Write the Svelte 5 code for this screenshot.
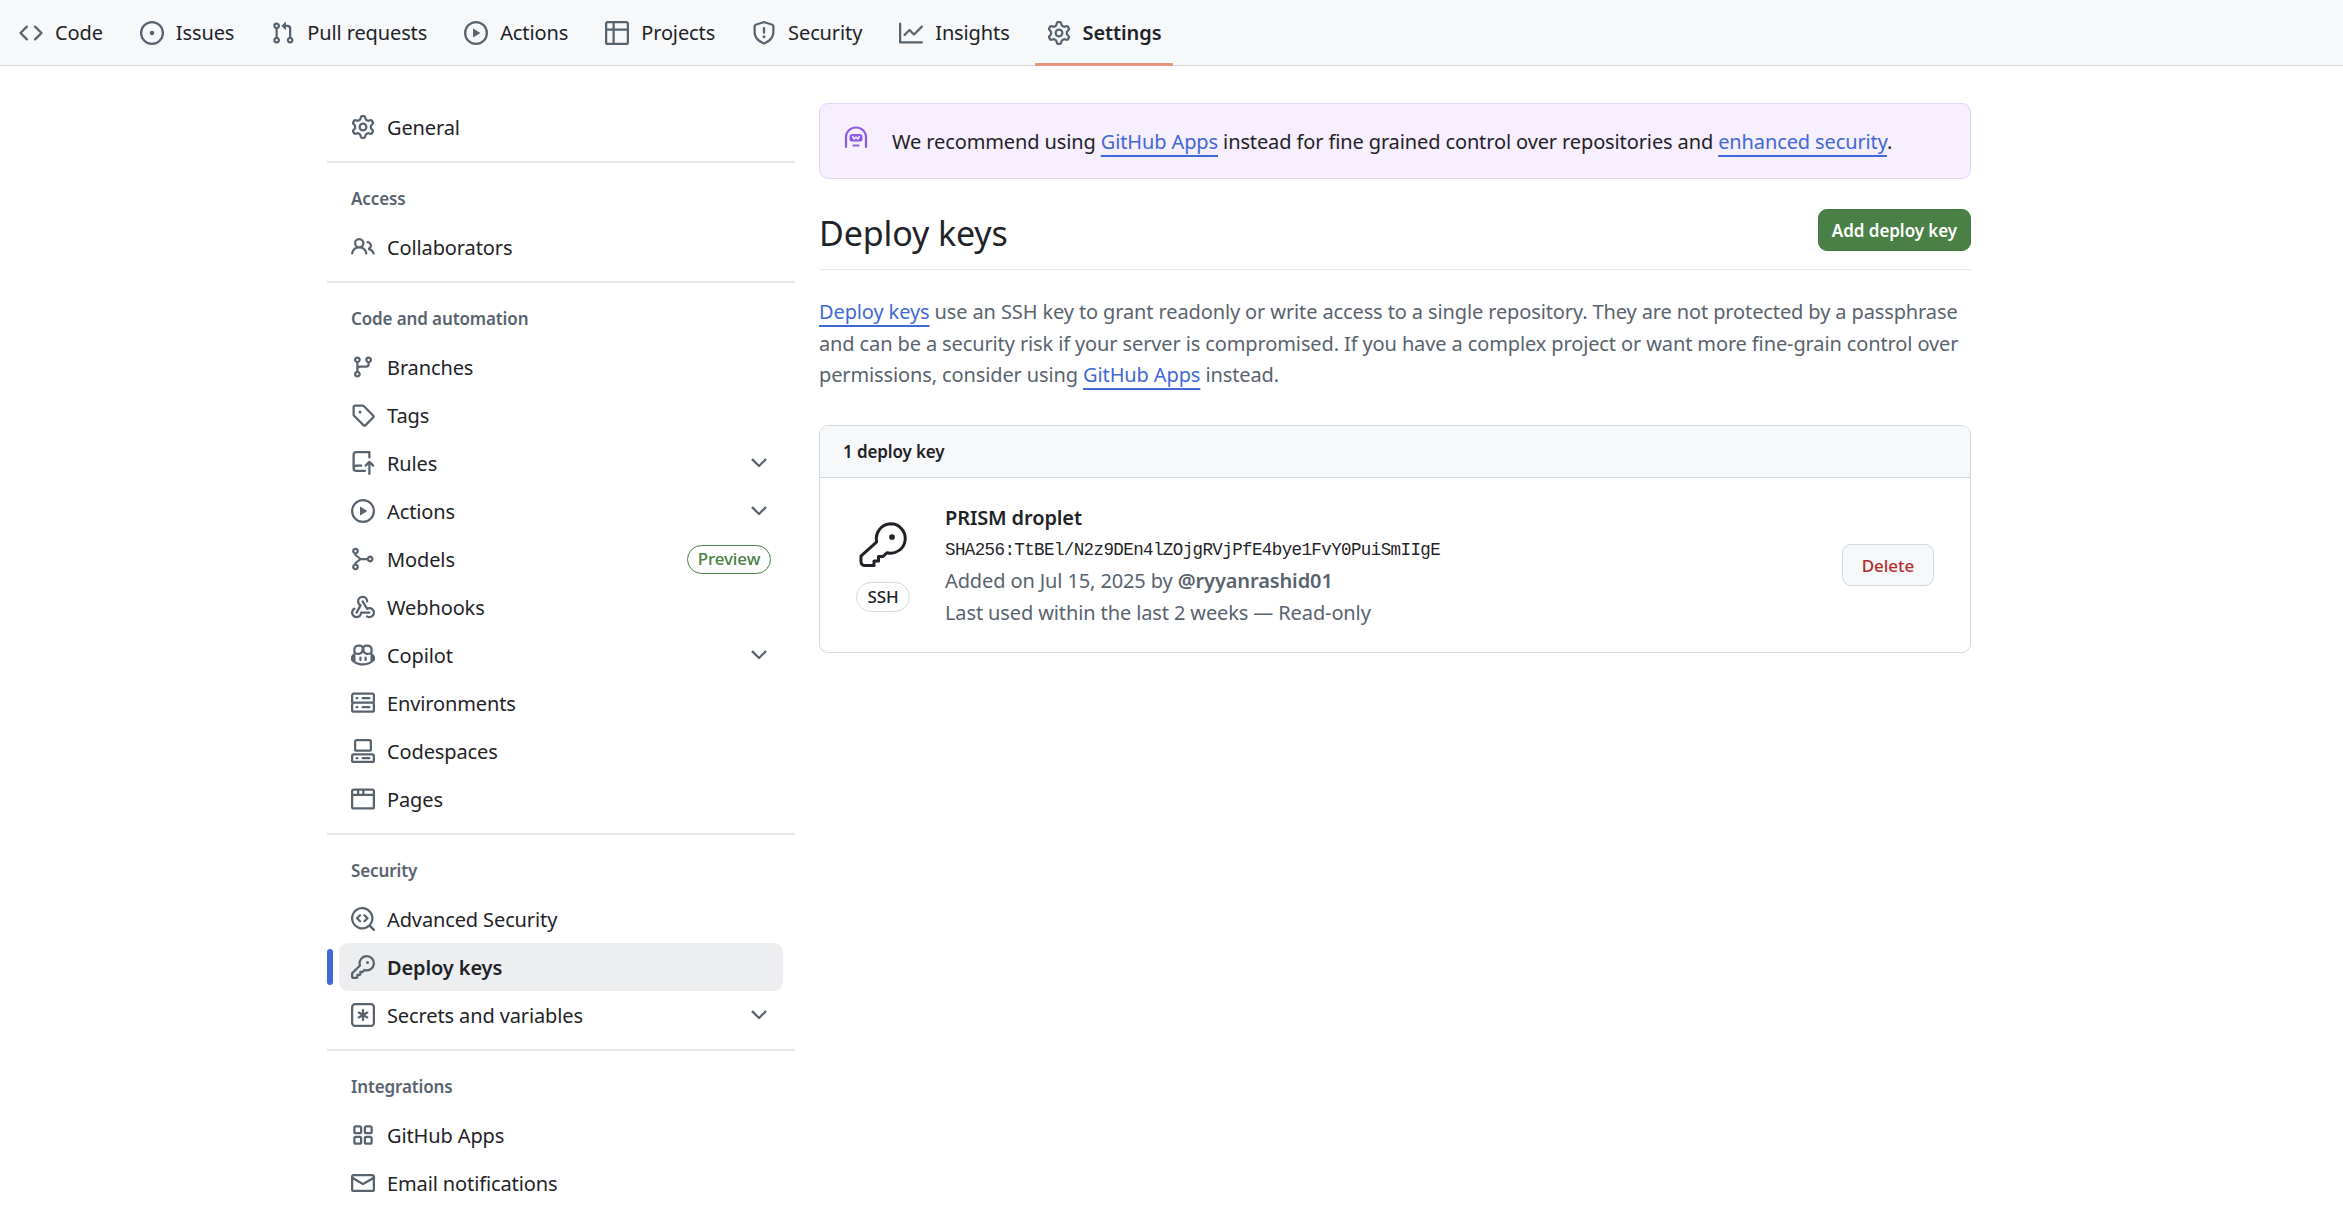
<script>
  const icons = {
    code: "m11.28 3.22 4.25 4.25a.75.75 0 0 1 0 1.06l-4.25 4.25a.749.749 0 0 1-1.275-.326.749.749 0 0 1 .215-.734L13.94 8l-3.72-3.72a.749.749 0 0 1 .326-1.275.749.749 0 0 1 .734.215Zm-6.56 0a.751.751 0 0 1 1.042.018.751.751 0 0 1 .018 1.042L2.06 8l3.72 3.72a.749.749 0 0 1-.326 1.275.749.749 0 0 1-.734-.215L.47 8.53a.75.75 0 0 1 0-1.06Z",
    issue: "M8 9.5a1.5 1.5 0 1 0 0-3 1.5 1.5 0 0 0 0 3Z M8 0a8 8 0 1 1 0 16A8 8 0 0 1 8 0ZM1.5 8a6.5 6.5 0 1 0 13 0 6.5 6.5 0 0 0-13 0Z",
    pull: "M1.5 3.25a2.25 2.25 0 1 1 3 2.122v5.256a2.251 2.251 0 1 1-1.5 0V5.372A2.25 2.25 0 0 1 1.5 3.25Zm5.677-.177L9.573.677A.25.25 0 0 1 10 .854V2.5h1A2.5 2.5 0 0 1 13.5 5v5.628a2.251 2.251 0 1 1-1.5 0V5a1 1 0 0 0-1-1h-1v1.646a.25.25 0 0 1-.427.177L7.177 3.427a.25.25 0 0 1 0-.354ZM3.75 2.5a.75.75 0 1 0 0 1.5.75.75 0 0 0 0-1.5Zm0 9.5a.75.75 0 1 0 0 1.5.75.75 0 0 0 0-1.5Zm8.25.75a.75.75 0 1 0 1.5 0 .75.75 0 0 0-1.5 0Z",
    play: "M8 0a8 8 0 1 1 0 16A8 8 0 0 1 8 0ZM1.5 8a6.5 6.5 0 1 0 13 0 6.5 6.5 0 0 0-13 0Zm4.879-2.773 4.264 2.559a.25.25 0 0 1 0 .428l-4.264 2.559A.25.25 0 0 1 6 10.559V5.442a.25.25 0 0 1 .379-.215Z",
    table: "M0 1.75C0 .784.784 0 1.75 0h12.5C15.216 0 16 .784 16 1.75v12.5A1.75 1.75 0 0 1 14.25 16H1.75A1.75 1.75 0 0 1 0 14.25ZM6.5 6.5v8h7.75a.25.25 0 0 0 .25-.25V6.5Zm8-1.5V1.75a.25.25 0 0 0-.25-.25H6.5V5Zm-13 1.5v7.75c0 .138.112.25.25.25H5v-8ZM5 5V1.5H1.75a.25.25 0 0 0-.25.25V5Z",
    shield: "M7.467.133a1.748 1.748 0 0 1 1.066 0l5.25 1.68A1.75 1.75 0 0 1 15 3.48V7c0 1.566-.32 3.182-1.303 4.682-.983 1.498-2.585 2.813-5.032 3.855a1.697 1.697 0 0 1-1.33 0c-2.447-1.042-4.049-2.357-5.032-3.855C1.32 10.182 1 8.566 1 7V3.48a1.75 1.75 0 0 1 1.217-1.667Zm.61 1.429a.25.25 0 0 0-.153 0l-5.25 1.68a.25.25 0 0 0-.174.238V7c0 1.358.275 2.666 1.057 3.86.784 1.194 2.121 2.34 4.366 3.297a.196.196 0 0 0 .154 0c2.245-.956 3.582-2.104 4.366-3.298C13.225 9.666 13.5 8.36 13.5 7V3.48a.251.251 0 0 0-.174-.237l-5.25-1.68ZM8.75 4.75v3a.75.75 0 0 1-1.5 0v-3a.75.75 0 0 1 1.5 0ZM9 10.5a1 1 0 1 1-2 0 1 1 0 0 1 2 0Z",
    graph: "M1.5 1.75V13.5h13.75a.75.75 0 0 1 0 1.5H.75a.75.75 0 0 1-.75-.75V1.75a.75.75 0 0 1 1.5 0Zm14.28 2.53-5.25 5.25a.75.75 0 0 1-1.06 0L7 7.06 4.28 9.78a.751.751 0 0 1-1.042-.018.751.751 0 0 1-.018-1.042l3.25-3.25a.75.75 0 0 1 1.06 0L10 7.94l4.72-4.72a.751.751 0 0 1 1.042.018.751.751 0 0 1 .018 1.042Z",
    gear: "M8 0a8.2 8.2 0 0 1 .701.031C9.444.095 9.99.645 10.16 1.29l.288 1.107c.018.066.079.158.212.224.231.114.454.243.668.386.123.082.233.09.299.071l1.103-.303c.644-.176 1.392.021 1.82.63.27.385.506.792.704 1.218.315.675.111 1.422-.364 1.891l-.814.806c-.049.048-.098.147-.088.294.016.257.016.515 0 .772-.01.147.038.246.088.294l.814.806c.475.469.679 1.216.364 1.891a7.977 7.977 0 0 1-.704 1.217c-.428.61-1.176.807-1.82.63l-1.102-.302c-.067-.019-.177-.011-.3.071a5.909 5.909 0 0 1-.668.386c-.133.066-.194.158-.211.224l-.29 1.106c-.168.646-.715 1.196-1.458 1.26a8.006 8.006 0 0 1-1.402 0c-.743-.064-1.289-.614-1.458-1.26l-.289-1.106c-.018-.066-.079-.158-.212-.224a5.738 5.738 0 0 1-.668-.386c-.123-.082-.233-.09-.299-.071l-1.103.303c-.644.176-1.392-.021-1.82-.63a8.12 8.12 0 0 1-.704-1.218c-.315-.675-.111-1.422.363-1.891l.815-.806c.05-.048.098-.147.088-.294a6.214 6.214 0 0 1 0-.772c.01-.147-.038-.246-.088-.294l-.815-.806C.635 6.045.431 5.298.746 4.623a7.92 7.92 0 0 1 .704-1.217c.428-.61 1.176-.807 1.82-.63l1.102.302c.067.019.177.011.3-.071.214-.143.437-.272.668-.386.133-.066.194-.158.211-.224l.29-1.106C6.009.645 6.556.095 7.299.03 7.53.01 7.764 0 8 0Zm-.571 1.525c-.036.003-.108.036-.137.146l-.289 1.105c-.147.561-.549.967-.998 1.189-.173.086-.34.183-.5.29-.417.278-.97.423-1.529.27l-1.103-.303c-.109-.03-.175.016-.195.045-.22.312-.412.644-.573.99-.014.031-.021.11.059.19l.815.806c.411.406.562.957.53 1.456a4.709 4.709 0 0 0 0 .582c.032.499-.119 1.05-.53 1.456l-.815.806c-.081.08-.073.159-.059.19.162.346.353.677.573.989.02.03.085.076.195.046l1.102-.303c.56-.153 1.113-.008 1.53.27.161.107.328.204.501.29.447.222.85.629.997 1.189l.289 1.105c.029.109.101.143.137.146a6.6 6.6 0 0 0 1.142 0c.036-.003.108-.036.137-.146l.289-1.105c.147-.561.549-.967.998-1.189.173-.086.34-.183.5-.29.417-.278.97-.423 1.529-.27l1.103.303c.109.029.175-.016.195-.045.22-.313.411-.644.573-.99.014-.031.021-.11-.059-.19l-.815-.806c-.411-.406-.562-.957-.53-1.456a4.709 4.709 0 0 0 0-.582c-.032-.499.119-1.05.53-1.456l.815-.806c.081-.08.073-.159.059-.19a6.464 6.464 0 0 0-.573-.989c-.02-.03-.085-.076-.195-.046l-1.102.303c-.56.153-1.113.008-1.53-.27a4.44 4.44 0 0 0-.501-.29c-.447-.222-.85-.629-.997-1.189l-.289-1.105c-.029-.11-.101-.143-.137-.146a6.6 6.6 0 0 0-1.142 0ZM11 8a3 3 0 1 1-6 0 3 3 0 0 1 6 0ZM9.5 8a1.5 1.5 0 1 0-3.001.001A1.5 1.5 0 0 0 9.5 8Z",
    people: "M2 5.5a3.5 3.5 0 1 1 5.898 2.549 5.508 5.508 0 0 1 3.034 4.084.75.75 0 1 1-1.482.235 4 4 0 0 0-7.9 0 .75.75 0 0 1-1.482-.236A5.507 5.507 0 0 1 3.102 8.05 3.493 3.493 0 0 1 2 5.5ZM11 4a3.001 3.001 0 0 1 2.22 5.018 5.01 5.01 0 0 1 2.56 3.012.749.749 0 0 1-.885.954.752.752 0 0 1-.549-.514 3.507 3.507 0 0 0-2.522-2.372.75.75 0 0 1-.574-.73v-.352a.75.75 0 0 1 .416-.672A1.5 1.5 0 0 0 11 5.5.75.75 0 0 1 11 4Zm-5.5-.5a2 2 0 1 0-.001 3.999A2 2 0 0 0 5.5 3.5Z",
    branch: "M9.5 3.25a2.25 2.25 0 1 1 3 2.122V6A2.5 2.5 0 0 1 10 8.5H6a1 1 0 0 0-1 1v1.128a2.251 2.251 0 1 1-1.5 0V5.372a2.25 2.25 0 1 1 1.5 0v1.836A2.493 2.493 0 0 1 6 7h4a1 1 0 0 0 1-1v-.628A2.25 2.25 0 0 1 9.5 3.25Zm-6 0a.75.75 0 1 0 1.5 0 .75.75 0 0 0-1.5 0Zm8.25-.75a.75.75 0 1 0 0 1.5.75.75 0 0 0 0-1.5ZM4.25 12a.75.75 0 1 0 0 1.5.75.75 0 0 0 0-1.5Z",
    tag: "M1 7.775V2.75C1 1.784 1.784 1 2.75 1h5.025c.464 0 .91.184 1.238.513l6.25 6.25a1.75 1.75 0 0 1 0 2.474l-5.026 5.026a1.75 1.75 0 0 1-2.474 0l-6.25-6.25A1.752 1.752 0 0 1 1 7.775Zm1.5 0c0 .066.026.13.073.177l6.25 6.25a.25.25 0 0 0 .354 0l5.025-5.025a.25.25 0 0 0 0-.354l-6.25-6.25a.25.25 0 0 0-.177-.073H2.75a.25.25 0 0 0-.25.25ZM6 5a1 1 0 1 1 0 2 1 1 0 0 1 0-2Z",
    rules: "M1 2.5A2.5 2.5 0 0 1 3.5 0h8.75a.75.75 0 0 1 .75.75v3.5a.75.75 0 0 1-1.5 0V1.5h-8a1 1 0 0 0-1 1v6.708A2.493 2.493 0 0 1 3.5 9h3.25a.75.75 0 0 1 0 1.5H3.5a1 1 0 0 0 0 2h5.75a.75.75 0 0 1 0 1.5H3.5A2.5 2.5 0 0 1 1 11.5Zm13.23 7.79h-.001l-1.224-1.224v6.184a.75.75 0 0 1-1.5 0V9.066L10.28 10.29a.75.75 0 0 1-1.06-1.061l2.505-2.504a.75.75 0 0 1 1.06 0L15.29 9.23a.751.751 0 0 1-.018 1.042.751.751 0 0 1-1.042.018Z",
    webhook: "M5.5 4.25a2.25 2.25 0 0 1 4.5 0 .75.75 0 0 0 1.5 0 3.75 3.75 0 1 0-6.14 2.889l-2.272 4.258a.75.75 0 0 0 1.324.706L7 7.25a.75.75 0 0 0-.309-1.015A2.25 2.25 0 0 1 5.5 4.25Z M7.364 3.607a.75.75 0 0 1 1.03.257l2.608 4.349a3.75 3.75 0 1 1-.628 6.785.75.75 0 0 1 .752-1.299 2.25 2.25 0 1 0-.033-3.88.75.75 0 0 1-1.03-.256L7.107 4.636a.75.75 0 0 1 .257-1.03Z M2.9 8.776A.75.75 0 0 1 2.625 9.8 2.25 2.25 0 1 0 6 11.75a.75.75 0 0 1 .75-.751h5.5a.75.75 0 0 1 0 1.5H7.425a3.751 3.751 0 1 1-5.55-3.998.75.75 0 0 1 1.024.274Z",
    copilot: "M7.998 15.035c-4.562 0-7.873-2.914-7.998-3.749V9.338c.085-.628.677-1.686 1.588-2.065.013-.07.024-.143.036-.218.029-.183.06-.384.126-.612-.201-.508-.254-1.084-.254-1.656 0-.87.128-1.769.693-2.484.579-.733 1.494-1.124 2.724-1.261 1.206-.134 2.262.034 2.944.765.05.053.096.108.139.165.044-.057.094-.112.143-.165.682-.731 1.738-.899 2.944-.765 1.23.137 2.145.528 2.724 1.261.566.715.693 1.614.693 2.484 0 .572-.053 1.148-.254 1.656.066.228.098.429.126.612.012.076.024.148.037.218.924.385 1.522 1.471 1.591 2.095v1.872c0 .766-3.351 3.795-8.002 3.795Zm0-1.485c2.28 0 4.584-1.11 5.002-1.433V7.862l-.023-.116c-.49.21-1.075.291-1.727.291-1.146 0-2.059-.327-2.71-.991A3.222 3.222 0 0 1 8 6.303a3.24 3.24 0 0 1-.544.743c-.65.664-1.563.991-2.71.991-.652 0-1.236-.081-1.727-.291l-.023.116v4.255c.419.323 2.722 1.433 5.002 1.433ZM6.762 2.83c-.193-.206-.637-.413-1.682-.297-1.019.113-1.479.404-1.713.7-.247.312-.369.789-.369 1.554 0 .793.129 1.171.308 1.371.162.181.519.379 1.442.379.853 0 1.339-.235 1.638-.54.315-.322.527-.827.617-1.553.117-.935-.037-1.395-.241-1.614Zm4.155-.297c-1.044-.116-1.488.091-1.681.297-.204.219-.359.679-.242 1.614.091.726.303 1.231.618 1.553.299.305.784.54 1.638.54.922 0 1.28-.198 1.442-.379.179-.2.308-.578.308-1.371 0-.765-.123-1.242-.37-1.554-.233-.296-.693-.587-1.713-.7Z M6.25 9.037a.75.75 0 0 1 .75.75v1.501a.75.75 0 0 1-1.5 0V9.787a.75.75 0 0 1 .75-.75Zm4.25.75v1.501a.75.75 0 0 1-1.5 0V9.787a.75.75 0 0 1 1.5 0Z",
    server: "M1.75 1h12.5c.966 0 1.75.784 1.75 1.75v4c0 .372-.116.717-.314 1 .198.283.314.628.314 1v4a1.75 1.75 0 0 1-1.75 1.75H1.75A1.75 1.75 0 0 1 0 13.25v-4c0-.372.116-.717.314-1a1.739 1.739 0 0 1-.314-1v-4C0 1.784.784 1 1.75 1ZM1.5 2.75v4c0 .138.112.25.25.25h12.5a.25.25 0 0 0 .25-.25v-4a.25.25 0 0 0-.25-.25H1.75a.25.25 0 0 0-.25.25Zm.25 5.75a.25.25 0 0 0-.25.25v4c0 .138.112.25.25.25h12.5a.25.25 0 0 0 .25-.25v-4a.25.25 0 0 0-.25-.25ZM7 4.75A.75.75 0 0 1 7.75 4h4.5a.75.75 0 0 1 0 1.5h-4.5A.75.75 0 0 1 7 4.75ZM7.75 10h4.5a.75.75 0 0 1 0 1.5h-4.5a.75.75 0 0 1 0-1.5ZM3 4.75A.75.75 0 0 1 3.75 4h.5a.75.75 0 0 1 0 1.5h-.5A.75.75 0 0 1 3 4.75ZM3.75 10h.5a.75.75 0 0 1 0 1.5h-.5a.75.75 0 0 1 0-1.5Z",
    codespaces: "M0 11.25c0-.966.784-1.75 1.75-1.75h12.5c.966 0 1.75.784 1.75 1.75v3A1.75 1.75 0 0 1 14.25 16H1.75A1.75 1.75 0 0 1 0 14.25Zm2-9.5C2 .784 2.784 0 3.75 0h8.5C13.216 0 14 .784 14 1.75v5a1.75 1.75 0 0 1-1.75 1.75h-8.5A1.75 1.75 0 0 1 2 6.75Zm1.75-.25a.25.25 0 0 0-.25.25v5c0 .138.112.25.25.25h8.5a.25.25 0 0 0 .25-.25v-5a.25.25 0 0 0-.25-.25Zm-2 9.5a.25.25 0 0 0-.25.25v3c0 .138.112.25.25.25h12.5a.25.25 0 0 0 .25-.25v-3a.25.25 0 0 0-.25-.25Z M7 12.75a.75.75 0 0 1 .75-.75h4.5a.75.75 0 0 1 0 1.5h-4.5a.75.75 0 0 1-.75-.75Zm-4 0a.75.75 0 0 1 .75-.75h.5a.75.75 0 0 1 0 1.5h-.5a.75.75 0 0 1-.75-.75Z",
    browser: "M0 2.75C0 1.784.784 1 1.75 1h12.5c.966 0 1.75.784 1.75 1.75v10.5A1.75 1.75 0 0 1 14.25 15H1.75A1.75 1.75 0 0 1 0 13.25ZM14.5 6h-13v7.25c0 .138.112.25.25.25h12.5a.25.25 0 0 0 .25-.25Zm0-1.5V2.75a.25.25 0 0 0-.25-.25H9v2Zm-7 0v-2h-2v2ZM4 4.5v-2H1.75a.25.25 0 0 0-.25.25V4.5Z",
    scan: "M8.47 4.97a.75.75 0 0 0 0 1.06L9.94 7.5 8.47 8.97a.75.75 0 1 0 1.06 1.06l2-2a.75.75 0 0 0 0-1.06l-2-2a.75.75 0 0 0-1.06 0ZM6.53 6.03a.75.75 0 0 0-1.06-1.06l-2 2a.75.75 0 0 0 0 1.06l2 2a.75.75 0 1 0 1.06-1.06L5.06 7.5l1.47-1.47Z M12.246 13.307a7.501 7.501 0 1 1 1.06-1.06l2.474 2.473a.749.749 0 0 1-.326 1.275.749.749 0 0 1-.734-.215ZM1.5 7.5a6.002 6.002 0 0 0 3.608 5.504 6.002 6.002 0 0 0 6.486-1.117.748.748 0 0 1 .292-.293A6 6 0 1 0 1.5 7.5Z",
    key: "M10.5 0a5.499 5.499 0 1 1-1.288 10.848l-.932.932a.749.749 0 0 1-.53.22H7v.75a.749.749 0 0 1-.22.53l-.5.5a.749.749 0 0 1-.53.22H5v.75a.749.749 0 0 1-.22.53l-.5.5a.749.749 0 0 1-.53.22h-2A1.75 1.75 0 0 1 0 14.25v-2c0-.199.079-.389.22-.53l4.932-4.932A5.5 5.5 0 0 1 10.5 0Zm-4 5.5c-.001.431.069.86.205 1.269a.75.75 0 0 1-.181.768L1.5 12.56v1.69c0 .138.112.25.25.25h1.69l.06-.06v-1.19a.75.75 0 0 1 .75-.75h1.19l.06-.06v-1.19a.75.75 0 0 1 .75-.75h1.19l1.023-1.025a.75.75 0 0 1 .768-.18A4 4 0 1 0 6.5 5.5ZM11 6a1 1 0 1 1 0-2 1 1 0 0 1 0 2Z",
    apps: "M1.5 3.25c0-.966.784-1.75 1.75-1.75h2.5c.966 0 1.75.784 1.75 1.75v2.5A1.75 1.75 0 0 1 5.75 7.5h-2.5A1.75 1.75 0 0 1 1.5 5.75Zm7 0c0-.966.784-1.75 1.75-1.75h2.5c.966 0 1.75.784 1.75 1.75v2.5a1.75 1.75 0 0 1-1.75 1.75h-2.5A1.75 1.75 0 0 1 8.5 5.75Zm-7 7c0-.966.784-1.75 1.75-1.75h2.5c.966 0 1.75.784 1.75 1.75v2.5a1.75 1.75 0 0 1-1.75 1.75h-2.5a1.75 1.75 0 0 1-1.75-1.75Zm7 0c0-.966.784-1.75 1.75-1.75h2.5c.966 0 1.75.784 1.75 1.75v2.5a1.75 1.75 0 0 1-1.75 1.75h-2.5a1.75 1.75 0 0 1-1.75-1.75ZM3.25 3a.25.25 0 0 0-.25.25v2.5c0 .138.112.25.25.25h2.5A.25.25 0 0 0 6 5.75v-2.5A.25.25 0 0 0 5.75 3Zm7 0a.25.25 0 0 0-.25.25v2.5c0 .138.112.25.25.25h2.5a.25.25 0 0 0 .25-.25v-2.5a.25.25 0 0 0-.25-.25Zm-7 7a.25.25 0 0 0-.25.25v2.5c0 .138.112.25.25.25h2.5a.25.25 0 0 0 .25-.25v-2.5a.25.25 0 0 0-.25-.25Zm7 0a.25.25 0 0 0-.25.25v2.5c0 .138.112.25.25.25h2.5a.25.25 0 0 0 .25-.25v-2.5a.25.25 0 0 0-.25-.25Z",
    mail: "M1.75 2h12.5c.966 0 1.75.784 1.75 1.75v8.5A1.75 1.75 0 0 1 14.25 14H1.75A1.75 1.75 0 0 1 0 12.25v-8.5C0 2.784.784 2 1.75 2ZM1.5 12.251c0 .138.112.25.25.25h12.5a.25.25 0 0 0 .25-.25V5.809L8.38 9.397a.75.75 0 0 1-.76 0L1.5 5.809v6.442Zm13-8.181v-.32a.25.25 0 0 0-.25-.25H1.75a.25.25 0 0 0-.25.25v.32L8 7.88Z",
    asterisk: "M0 2.75A2.75 2.75 0 0 1 2.75 0h10.5A2.75 2.75 0 0 1 16 2.75v10.5A2.75 2.75 0 0 1 13.25 16H2.75A2.75 2.75 0 0 1 0 13.25ZM2.75 1.5c-.69 0-1.25.56-1.25 1.25v10.5c0 .69.56 1.25 1.25 1.25h10.5c.69 0 1.25-.56 1.25-1.25V2.75c0-.69-.56-1.25-1.25-1.25Z M8 4a.75.75 0 0 1 .75.75V6.7l1.69-.975a.75.75 0 0 1 .75 1.3L9.5 8l1.69.976a.75.75 0 0 1-.75 1.298L8.75 9.3v1.951a.75.75 0 0 1-1.5 0V9.299l-1.69.976a.75.75 0 0 1-.75-1.3L6.5 8l-1.69-.975a.75.75 0 0 1 .75-1.3l1.69.976V4.75A.75.75 0 0 1 8 4Z",
    models: "M3 .5a2.25 2.25 0 0 1 .75 4.37V5.2L6.6 7.25h4.03a2.25 2.25 0 1 1 0 1.5H6.6l-2.85 2.05v.33a2.25 2.25 0 1 1-1.5 0v-.4a.75.75 0 0 1 .31-.6L5.3 8 2.56 5.87a.75.75 0 0 1-.31-.6v-.4A2.25 2.25 0 0 1 3 .5Zm0 1.5a.75.75 0 1 0 0 1.5.75.75 0 0 0 0-1.5Zm9.75 5.25a.75.75 0 1 0 0 1.5.75.75 0 0 0 0-1.5ZM3 12.5A.75.75 0 1 0 3 14a.75.75 0 0 0 0-1.5Z",
    chevron: "M12.78 5.22a.749.749 0 0 1 0 1.06l-4.25 4.25a.749.749 0 0 1-1.06 0L3.22 6.28a.749.749 0 1 1 1.06-1.06L8 8.939l3.72-3.719a.749.749 0 0 1 1.06 0Z"
  };

  const tabs = [
    { label: "Code", icon: "code" },
    { label: "Issues", icon: "issue" },
    { label: "Pull requests", icon: "pull" },
    { label: "Actions", icon: "play" },
    { label: "Projects", icon: "table" },
    { label: "Security", icon: "shield" },
    { label: "Insights", icon: "graph" },
    { label: "Settings", icon: "gear", active: true }
  ];

  const sections = [
    { items: [{ label: "General", icon: "gear" }] },
    { title: "Access", items: [{ label: "Collaborators", icon: "people" }] },
    {
      title: "Code and automation",
      items: [
        { label: "Branches", icon: "branch" },
        { label: "Tags", icon: "tag" },
        { label: "Rules", icon: "rules", more: true },
        { label: "Actions", icon: "play", more: true },
        { label: "Models", icon: "models", badge: "Preview" },
        { label: "Webhooks", icon: "webhook" },
        { label: "Copilot", icon: "copilot", more: true },
        { label: "Environments", icon: "server" },
        { label: "Codespaces", icon: "codespaces" },
        { label: "Pages", icon: "browser" }
      ]
    },
    {
      title: "Security",
      items: [
        { label: "Advanced Security", icon: "scan" },
        { label: "Deploy keys", icon: "key", active: true },
        { label: "Secrets and variables", icon: "asterisk", more: true }
      ]
    },
    {
      title: "Integrations",
      items: [
        { label: "GitHub Apps", icon: "apps" },
        { label: "Email notifications", icon: "mail" }
      ]
    }
  ];
</script>

{#snippet icon(name)}
  <svg class="icon" viewBox="0 0 16 16" aria-hidden="true"><path fill="currentColor" fill-rule="evenodd" d={icons[name]} /></svg>
{/snippet}

<nav class="tabs">
  {#each tabs as tab}
    <a href="#top" class="tab" class:active={tab.active}>
      {@render icon(tab.icon)}
      <span>{tab.label}</span>
    </a>
  {/each}
</nav>

<div class="page">
  <aside class="side">
    {#each sections as section, i}
      {#if i > 0}
        <div class="divider"></div>
      {/if}
      {#if section.title}
        <h2>{section.title}</h2>
      {/if}
      {#each section.items as item}
        <a href="#top" class="item" class:active={item.active}>
          {@render icon(item.icon)}
          <span class="label">{item.label}</span>
          {#if item.badge}
            <span class="badge">{item.badge}</span>
          {/if}
          {#if item.more}
            <span class="more">{@render icon("chevron")}</span>
          {/if}
        </a>
      {/each}
    {/each}
  </aside>

  <main class="main">
    <div class="banner">
      <svg class="mona" viewBox="0 0 24 24" aria-hidden="true">
        <path d="M2 21V11a10 9.500 0 0 1 20 0v10" fill="none" stroke="currentColor" stroke-width="2.200" stroke-linecap="round" />
        <rect x="5.500" y="8" width="13" height="7.500" rx="2.500" fill="currentColor" />
        <path d="M8.500 10l1.500 3 2-2 2 2 1.500-3" fill="none" stroke="#f7eefe" stroke-width="1.600" stroke-linejoin="round" />
        <path d="M9.500 19.500h5" stroke="currentColor" stroke-width="2.200" stroke-linecap="round" />
      </svg>
      <p>We recommend using <a href="#top">GitHub Apps</a> instead for fine grained control over repositories and <a href="#top">enhanced security</a>.</p>
    </div>

    <div class="head">
      <h1>Deploy keys</h1>
      <button class="add">Add deploy key</button>
    </div>

    <p class="intro">
      <a href="#top">Deploy keys</a> use an SSH key to grant readonly or write access to a single repository. They are not protected by a passphrase<br />
      and can be a security risk if your server is compromised. If you have a complex project or want more fine-grain control over<br />
      permissions, consider using <a href="#top">GitHub Apps</a> instead.
    </p>

    <section class="box">
      <div class="box-head">1 deploy key</div>
      <div class="row">
        <div class="kind">
          <svg class="big-key" viewBox="0 0 16 16" aria-hidden="true">
            <path d="M10.500.6a4.900 4.900 0 1 1-1.200 9.650L8 11.500H6.500v1.500H5v1.500H1.900a1.250 1.250 0 0 1-1.250-1.250v-1.900L5.900 6.600A4.900 4.900 0 0 1 10.500.6Z" fill="none" stroke="currentColor" stroke-width="1" stroke-linejoin="round" />
            <circle cx="11" cy="5" r=".95" fill="currentColor" />
          </svg>
          <span class="ssh">SSH</span>
        </div>
        <div class="info">
          <strong>PRISM droplet</strong>
          <code>SHA256:TtBEl/N2z9DEn4lZOjgRVjPfE4bye1FvY0PuiSmIIgE</code>
          <span>Added on Jul 15, 2025 by <b>@ryyanrashid01</b></span>
          <span>Last used within the last 2 weeks — Read-only</span>
        </div>
        <button class="delete">Delete</button>
      </div>
    </section>
  </main>
</div>

<style>
  :global(body) {
    margin: 0;
    background: #fff;
    overflow: hidden;
    color: #1f2328;
    font-family: "Noto Sans", "Open Sans", sans-serif;
    font-size: 20px;
    letter-spacing: -0.12px;
  }

  a {
    color: inherit;
    text-decoration: none;
  }

  .icon {
    width: 24px;
    height: 24px;
    flex: none;
    color: #59636e;
  }

  .tabs {
    display: flex;
    height: 65px;
    padding-left: 7px;
    background: #f6f8fa;
    border-bottom: 1px solid #d1d9e0;
    box-sizing: content-box;
    gap: 13px;
  }

  .tab {
    display: flex;
    align-items: center;
    gap: 12px;
    padding: 0 12px;
    height: 65px;
    position: relative;
    white-space: nowrap;
  }

  .tab.active {
    font-weight: 600;
  }

  .tab.active::after {
    content: "";
    position: absolute;
    left: 0;
    right: 0;
    bottom: -1px;
    height: 3px;
    background: #e8957f;
  }

  .page {
    display: flex;
    align-items: flex-start;
    gap: 24px;
    padding: 37px 0 0 327px;
  }

  .side {
    width: 468px;
    flex: none;
  }

  .divider {
    height: 2px;
    margin-top: 10px;
    background: #e4e7eb;
  }

  h2 {
    margin: 0;
    padding: 22px 24px 10px;
    font-size: 17px;
    line-height: 28px;
    font-weight: 600;
    color: #59636e;
  }

  .item {
    display: flex;
    align-items: center;
    gap: 12px;
    height: 48px;
    margin: 0 12px;
    padding: 0 12px;
    border-radius: 9px;
    position: relative;
  }

  .item.active {
    background: #eceef0;
    font-weight: 600;
  }

  .item.active::before {
    content: "";
    position: absolute;
    left: -12px;
    top: 6px;
    width: 6px;
    height: 36px;
    border-radius: 3px;
    background: #4169d6;
  }

  .label {
    flex: 1;
  }

  .more {
    display: flex;
  }

  .badge {
    box-sizing: border-box;
    height: 29px;
    width: 84px;
    border: 1.5px solid #4a8045;
    border-radius: 15px;
    font-size: 17px;
    line-height: 25px;
    font-weight: 500;
    text-align: center;
    color: #4a8045;
  }

  .main {
    width: 1152px;
    flex: none;
  }

  .banner {
    box-sizing: border-box;
    display: flex;
    align-items: center;
    gap: 24px;
    height: 76px;
    padding: 0 24px;
    background: #f7eefe;
    border: 1px solid #e3d5f9;
    border-radius: 9px;
  }

  .banner p {
    margin: 0;
  }

  .banner a,
  .intro a {
    color: #4169d6;
    text-decoration: underline 2px;
    text-underline-offset: 6px;
    text-decoration-skip-ink: none;
  }

  .mona {
    width: 24px;
    height: 24px;
    flex: none;
    margin-top: -6px;
    color: #8b5ce6;
  }

  .head {
    display: flex;
    align-items: flex-start;
    justify-content: space-between;
    height: 90px;
    margin-top: 1px;
    padding-top: 29px;
    box-sizing: border-box;
    border-bottom: 1px solid #e4e7eb;
  }

  h1 {
    margin: 0;
    font-size: 34px;
    line-height: 48px;
    font-weight: 400;
  }

  .add,
  .delete {
    font: inherit;
    font-size: 17px;
    letter-spacing: -0.05px;
    height: 42px;
    border-radius: 9px;
    padding: 0;
  }

  .add {
    width: 153px;
    border: 1px solid #447a40;
    background: #4a8045;
    color: #fff;
    font-weight: 600;
  }

  .intro {
    margin: 26px 0 0;
    line-height: 31.5px;
    color: #59636e;
    white-space: nowrap;
  }

  .box {
    box-sizing: border-box;
    height: 228px;
    margin-top: 34px;
    border: 1px solid #d1d9e0;
    border-radius: 9px;
    overflow: hidden;
  }

  .box-head {
    height: 51px;
    padding-left: 23px;
    background: #f6f8fa;
    border-bottom: 1px solid #d1d9e0;
    font-size: 17px;
    line-height: 52px;
    font-weight: 600;
  }

  .row {
    display: flex;
    align-items: center;
    height: 175px;
    padding: 0 36px;
  }

  .kind {
    display: flex;
    flex-direction: column;
    align-items: center;
    gap: 12px;
    width: 54px;
    margin-top: 3px;
    flex: none;
  }

  .big-key {
    width: 48px;
    height: 48px;
    color: #1f2328;
  }

  .ssh {
    box-sizing: border-box;
    width: 54px;
    height: 30px;
    border: 1px solid #d1d9e0;
    border-radius: 15px;
    font-size: 17px;
    line-height: 28px;
    font-weight: 500;
    text-align: center;
  }

  .info {
    flex: 1;
    display: flex;
    flex-direction: column;
    margin-left: 35px;
    color: #59636e;
    line-height: 31.5px;
  }

  .info strong {
    color: #1f2328;
    font-weight: 600;
  }

  .info code {
    margin: 2px 0 -2px;
    font-family: "Liberation Mono", monospace;
    font-size: 17.5px;
    letter-spacing: -0.6px;
    color: #1f2328;
  }

  .info span:last-child {
    margin-top: 1px;
  }

  .info b {
    font-weight: 600;
  }

  .delete {
    width: 92px;
    border: 1px solid #d1d9e0;
    background: #f6f8fa;
    color: #b62c2c;
    font-weight: 500;
  }
</style>
